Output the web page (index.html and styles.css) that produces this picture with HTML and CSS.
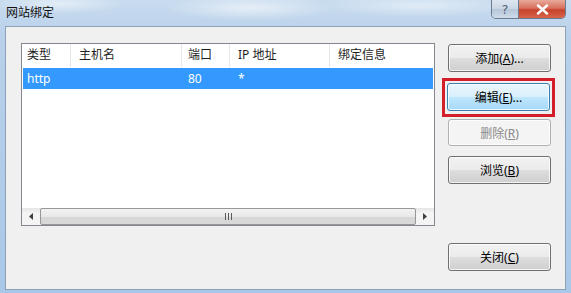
FILE: index.html
```html
<!DOCTYPE html>
<html lang="zh-CN">
<head>
<meta charset="utf-8">
<title>网站绑定</title>
<link rel="stylesheet" href="styles.css">
</head>
<body>
<div class="window">
  <div class="titlebar">
    <span class="title">网站绑定</span>
    <div class="caption">
      <span class="cap-btn help">?</span>
      <span class="cap-btn close">
        <svg width="13" height="11" viewBox="0 0 13 11"><path d="M2 1.5 L11 9.5 M11 1.5 L2 9.5" stroke="#fff" stroke-width="2.4" stroke-linecap="round"/></svg>
      </span>
    </div>
  </div>
  <div class="client">
    <div class="listbox">
      <div class="header">
        <div class="col c1">类型</div>
        <div class="col c2">主机名</div>
        <div class="col c3">端口</div>
        <div class="col c4">IP 地址</div>
        <div class="col c5">绑定信息</div>
      </div>
      <div class="row selected">
        <div class="col c1">http</div>
        <div class="col c2"></div>
        <div class="col c3">80</div>
        <div class="col c4">*</div>
        <div class="col c5"></div>
      </div>
      <div class="filler"></div>
      <div class="hscroll">
        <div class="arrow left"><svg width="4" height="7" viewBox="0 0 4 7"><path d="M4 0 L0 3.5 L4 7 Z" fill="#404040"/></svg></div>
        <div class="thumb"><span class="grip"></span></div>
        <div class="arrow right"><svg width="4" height="7" viewBox="0 0 4 7"><path d="M0 0 L4 3.5 L0 7 Z" fill="#404040"/></svg></div>
      </div>
    </div>
    <div class="buttons">
      <button class="btn b-add">添加(<u>A</u>)...</button>
      <div class="highlight">
        <button class="btn b-edit">编辑(<u>E</u>)...</button>
      </div>
      <button class="btn b-del" disabled>删除(<u>R</u>)</button>
      <button class="btn b-browse">浏览(<u>B</u>)</button>
      <button class="btn b-close">关闭(<u>C</u>)</button>
    </div>
  </div>
</div>
</body>
</html>
```

FILE: styles.css
```css
html, body {
  margin: 0;
  padding: 0;
  width: 571px;
  height: 293px;
  overflow: hidden;
}
body {
  font-family: "Noto Sans", "Noto Sans CJK SC", sans-serif;
  font-size: 12px;
  color: #000;
}
.window {
  width: 571px;
  height: 293px;
  box-sizing: border-box;
  background:
    radial-gradient(ellipse 120px 18px at 250px 8px, rgba(255,255,255,0.55), rgba(255,255,255,0) 70%),
    radial-gradient(ellipse 140px 16px at 420px 6px, rgba(255,255,255,0.45), rgba(255,255,255,0) 70%),
    radial-gradient(ellipse 90px 14px at 60px 4px, rgba(255,255,255,0.5), rgba(255,255,255,0) 70%),
    linear-gradient(180deg, #c9dcef 0%, #b9d1ea 12%, #a9c8e8 100%);
  display: flex;
  flex-direction: column;
}
.titlebar {
  height: 26px;
  display: flex;
  align-items: flex-start;
  padding-left: 6px;
}
.title {
  line-height: 26px;
  font-size: 12px;
  color: #111;
}
.caption {
  margin-left: auto;
  margin-right: 5px;
  display: flex;
  border: 1px solid #6b7c8f;
  border-top: none;
  border-radius: 0 0 5px 5px;
  overflow: hidden;
  height: 18px;
}
.cap-btn {
  display: flex;
  align-items: center;
  justify-content: center;
  height: 18px;
}
.help {
  width: 26px;
  background: linear-gradient(180deg, #dde6f0 0%, #cad7e5 50%, #b6c6d8 51%, #cddbea 100%);
  color: #56667a;
  font-size: 13px;
  font-family: "DejaVu Sans", sans-serif;
  border-right: 1px solid #6b7c8f;
}
.close {
  width: 46px;
  background: linear-gradient(180deg, #e9a99b 0%, #d8715f 45%, #c7432b 55%, #d5644a 100%);
}
.client {
  flex: 1;
  margin: 0 5px 3px 5px;
  background: #f0f0f0;
  border: 1px solid #8aa1b8;
  display: flex;
  align-items: flex-start;
  padding: 16px 0 0 15px;
  gap: 13px;
}
.listbox {
  width: 414px;
  height: 183px;
  box-sizing: border-box;
  border: 1px solid #828790;
  background: #fff;
  display: flex;
  flex-direction: column;
}
.header, .row {
  display: flex;
}
.header {
  height: 23px;
  line-height: 22px;
  color: #1e1e1e;
}
.header .col {
  border-right: 1px solid #e3e6ea;
}
.header .c5 { border-right: none; }
.col {
  box-sizing: border-box;
  white-space: nowrap;
  overflow: hidden;
}
.c1 { width: 49px; padding-left: 5px; }
.c2 { width: 111px; padding-left: 8px; }
.c3 { width: 48px; padding-left: 6px; }
.c4 { width: 100px; padding-left: 8px; }
.c5 { flex: 1; padding-left: 8px; }
.row {
  height: 21px;
  line-height: 21px;
  margin: 1px 1px 0 1px;
}
.row .c1 { width: 48px; padding-left: 4px; }
.selected {
  background: #3399ff;
  color: #fff;
}
.filler {
  flex: 1;
}
.hscroll {
  height: 17px;
  display: flex;
  background: linear-gradient(180deg, #e6e6e6 0%, #f4f4f4 30%, #f4f4f4 100%);
}
.arrow {
  width: 18px;
  display: flex;
  align-items: center;
  justify-content: center;
}
.thumb {
  flex: 1;
  border: 1px solid #979797;
  border-radius: 2px;
  background: linear-gradient(180deg, #f3f3f3 0%, #e8e8e8 50%, #d6d6d6 51%, #d9d9d9 100%);
  display: flex;
  align-items: center;
  justify-content: center;
}
.grip {
  width: 7px;
  height: 7px;
  background: repeating-linear-gradient(90deg, #5a5a5a 0, #5a5a5a 1px, transparent 1px, transparent 3px);
}
.buttons {
  display: flex;
  flex-direction: column;
  align-items: flex-start;
  margin-top: 1px;
}
.btn {
  width: 103px;
  height: 28px;
  box-sizing: border-box;
  border: 1px solid #707070;
  border-radius: 3px;
  background: linear-gradient(180deg, #f2f2f2 0%, #ebebeb 48%, #dddddd 52%, #cfcfcf 100%);
  box-shadow: inset 0 0 0 1px rgba(255,255,255,0.75);
  font-family: "Noto Sans", "Noto Sans CJK SC", sans-serif;
  font-size: 12px;
  color: #000;
  padding: 0;
  margin: 0;
  display: block;
}
.btn u { text-decoration: underline; }
.highlight {
  margin: 6px 0 0 -6px;
  border: 3px solid #d21f2a;
  padding: 2px 2px 3px 2px;
}
.b-edit {
  display: block;
  border-color: #3c7fb1;
  background: linear-gradient(180deg, #eaf6fd 0%, #d9f0fc 48%, #bee6fd 52%, #a7d9f5 100%);
}
.b-del {
  margin-top: 2px;
  height: 27px;
  border-color: #adb2b5;
  background: #f4f4f4;
  color: #8a8a8a;
}
.b-browse {
  margin-top: 10px;
}
.b-close {
  margin-top: 59px;
}
```
